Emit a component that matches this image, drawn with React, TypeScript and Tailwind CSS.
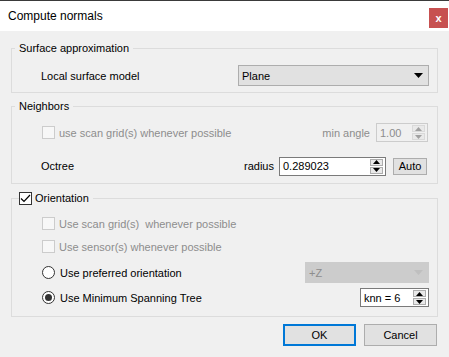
import React from 'react';

const font = { fontFamily: '"Liberation Sans", Arial, sans-serif' };

function SpinArrows({ disabled = false }: { disabled?: boolean }) {
    const c = disabled ? '#a0a0a0' : '#000';
    const box = disabled ? 'border-[#d9d9d9]' : 'border-[#adadad]';
    return (
        <div className="flex h-full w-[15px] flex-col items-center justify-center gap-[1px]">
            <div className={`flex h-[7px] w-[13px] items-center justify-center border ${box} bg-[#e9e9e9]`}>
                <svg width="7" height="4" viewBox="0 0 7 4"><path d="M3.5 0 L7 4 L0 4 Z" fill={c} /></svg>
            </div>
            <div className={`flex h-[7px] w-[13px] items-center justify-center border ${box} bg-[#e9e9e9]`}>
                <svg width="7" height="4" viewBox="0 0 7 4"><path d="M0 0 L7 0 L3.5 4 Z" fill={c} /></svg>
            </div>
        </div>
    );
}

function SpinBox({ value, className, disabled = false }: { value: string; className: string; disabled?: boolean }) {
    return (
        <div
            className={`flex items-center justify-between border pl-[3px] pr-[1px] ${
                disabled ? 'border-[#cccccc] bg-[#f0f0f0] text-[#8d8d8d]' : 'border-[#7a7a7a] bg-white text-black'
            } ${className}`}
        >
            <span>{value}</span>
            <SpinArrows disabled={disabled} />
        </div>
    );
}

function Check({ checked = false, disabled = false }: { checked?: boolean; disabled?: boolean }) {
    return (
        <span
            className={`flex h-[13px] w-[13px] shrink-0 items-center justify-center border ${
                disabled ? 'border-[#cccccc] bg-[#f7f7f7]' : 'border-[#333333] bg-white'
            }`}
        >
            {checked && (
                <svg width="11" height="9" viewBox="0 0 11 9">
                    <path d="M1 4.5 L4 7.5 L10 1" stroke="#000" strokeWidth="1.2" fill="none" />
                </svg>
            )}
        </span>
    );
}

function Radio({ checked = false }: { checked?: boolean }) {
    return (
        <span className="flex h-[13px] w-[13px] shrink-0 items-center justify-center rounded-full border border-[#333333] bg-white">
            {checked && <span className="h-[7px] w-[7px] rounded-full bg-[#333333]" />}
        </span>
    );
}

function Combo({ value, className, disabled = false }: { value: string; className: string; disabled?: boolean }) {
    return (
        <div
            className={`flex items-center justify-between border pl-[3px] pr-[2px] ${
                disabled ? 'border-[#cccccc] bg-[#cccccc] text-[#8d8d8d]' : 'border-[#adadad] bg-[#e1e1e1] text-black'
            } ${className}`}
        >
            <span>{value}</span>
            <svg width="9" height="5" viewBox="0 0 9 5" className="mr-[3px]">
                <path d="M0 0 L9 0 L4.5 5 Z" fill={disabled ? '#bfbfbf' : '#000'} />
            </svg>
        </div>
    );
}

export default function App() {
    return (
        <div className="h-[357px] w-[449px] overflow-hidden bg-[#f0f0f0] text-[11px] leading-[16px] text-black" style={font}>
            {/* title bar */}
            <div className="border-t border-[#3a3a3a] bg-white">
                <div className="flex h-[30px] items-start justify-between">
                    <span className="ml-[8px] mt-[7px] text-[12px] leading-[16px]">Compute normals</span>
                    <button className="mr-[1px] mt-[7px] flex h-[20px] w-[19px] items-center justify-center bg-[#c75050] text-[11px] font-bold leading-none text-white">
                        x
                    </button>
                </div>
            </div>

            <div className="px-[11px] pt-[9px]">
                {/* Surface approximation */}
                <fieldset className="w-[427px] border border-[#dcdcdc] pb-[6px]">
                    <legend className="ml-[3px] px-[4px]">Surface approximation</legend>
                    <div className="mt-[9px] flex h-[21px] items-center pl-[29px] pr-[8px]">
                        <span>Local surface model</span>
                        <Combo value="Plane" className="ml-auto h-[21px] w-[191px]" />
                    </div>
                </fieldset>

                {/* Neighbors */}
                <fieldset className="mt-[5px] w-[427px] border border-[#dcdcdc] pb-[7px]">
                    <legend className="ml-[3px] px-[4px]">Neighbors</legend>
                    <div className="mt-[9px] flex h-[19px] items-center pl-[30px] pr-[9px]">
                        <Check disabled />
                        <span className="ml-[4px] text-[#8d8d8d]">use scan grid(s) whenever possible</span>
                        <span className="ml-auto mr-[6px] text-[#8d8d8d]">min angle</span>
                        <SpinBox value="1.00" disabled className="h-[19px] w-[52px]" />
                    </div>
                    <div className="mt-[14px] flex h-[20px] items-center pl-[29px] pr-[10px]">
                        <span>Octree</span>
                        <span className="ml-auto mr-[5px]">radius</span>
                        <SpinBox value="0.289023" className="h-[19px] w-[107px]" />
                        <button className="ml-[7px] h-[17px] w-[34px] border border-[#adadad] bg-[#e1e1e1] leading-[14px]">Auto</button>
                    </div>
                </fieldset>

                {/* Orientation */}
                <fieldset className="mt-[6px] w-[427px] border border-[#dcdcdc] pb-[9px]">
                    <legend className="ml-[7px] flex items-center pr-[4px]">
                        <Check checked />
                        <span className="ml-[3px]">Orientation</span>
                    </legend>
                    <div className="pl-[30px] pr-[8px]">
                        <div className="mt-[11px] flex h-[13px] items-center">
                            <Check disabled />
                            <span className="ml-[4px] text-[#8d8d8d]">Use scan grid(s)&nbsp; whenever possible</span>
                        </div>
                        <div className="mt-[10px] flex h-[13px] items-center">
                            <Check disabled />
                            <span className="ml-[4px] text-[#8d8d8d]">Use sensor(s) whenever possible</span>
                        </div>
                        <div className="mt-[9px] flex h-[21px] items-center">
                            <Radio />
                            <span className="ml-[5px]">Use preferred orientation</span>
                            <Combo value="+Z" disabled className="ml-auto h-[21px] w-[124px]" />
                        </div>
                        <div className="mt-[5px] flex h-[19px] items-center">
                            <Radio checked />
                            <span className="ml-[5px]">Use Minimum Spanning Tree</span>
                            <SpinBox value="knn = 6" className="ml-auto h-[19px] w-[69px]" />
                        </div>
                    </div>
                </fieldset>

                {/* buttons */}
                <div className="mt-[7px] flex w-[426px] justify-end gap-[8px]">
                    <button className="h-[22px] w-[73px] border-2 border-[#0078d7] bg-[#e1e1e1]">OK</button>
                    <button className="h-[22px] w-[73px] border border-[#adadad] bg-[#e1e1e1]">Cancel</button>
                </div>
            </div>
        </div>
    );
}
